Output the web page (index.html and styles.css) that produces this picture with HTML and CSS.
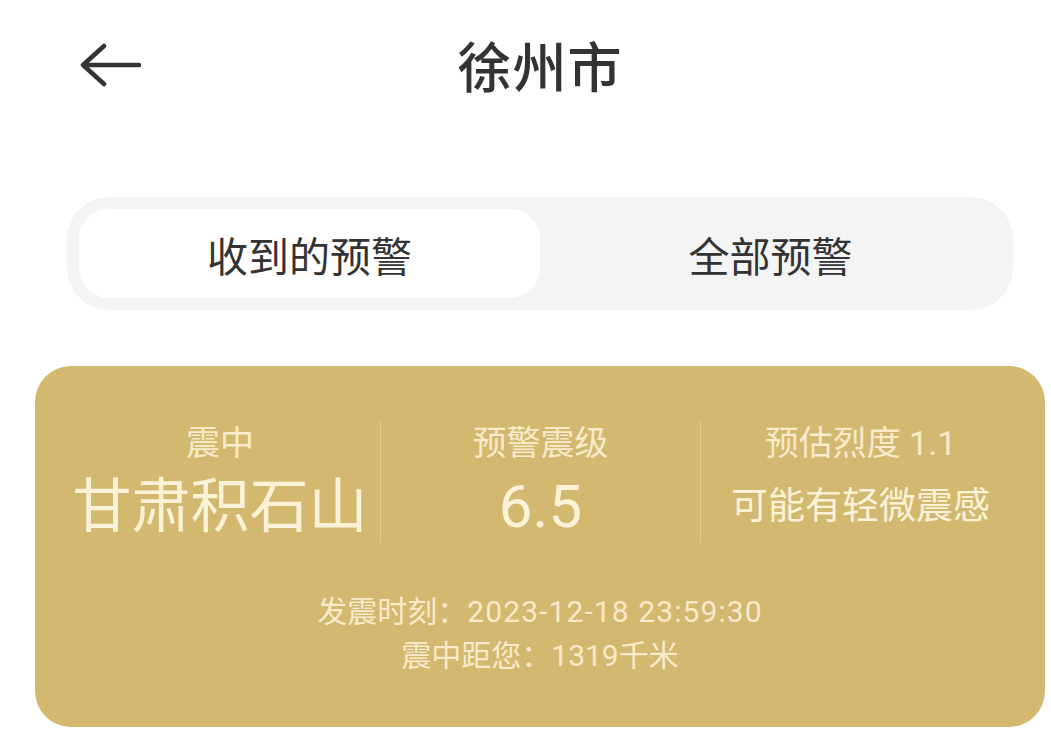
FILE: index.html
```html
<!DOCTYPE html>
<html lang="zh-CN">
<head>
<meta charset="utf-8">
<title>徐州市</title>
<link rel="stylesheet" href="styles.css">
</head>
<body>
<div class="screen">
  <header class="header">
    <button class="back" aria-label="返回">
      <svg width="64" height="48" viewBox="0 0 64 48">
        <path d="M24 5 L3 24 L24 43 M3 24 L59 24" fill="none" stroke="#333" stroke-width="4.5" stroke-linecap="round" stroke-linejoin="round"/>
      </svg>
    </button>
    <h1 class="title">徐州市</h1>
  </header>

  <nav class="segment">
    <div class="seg-item active">收到的预警</div>
    <div class="seg-item">全部预警</div>
  </nav>

  <section class="card">
    <div class="stats">
      <div class="stat">
        <div class="label">震中</div>
        <div class="value place">甘肃积石山</div>
      </div>
      <div class="stat">
        <div class="label">预警震级</div>
        <div class="value mag">6.5</div>
      </div>
      <div class="stat">
        <div class="label">预估烈度 1.1</div>
        <div class="value feel">可能有轻微震感</div>
      </div>
    </div>
    <div class="info">
      <div class="line">发震时刻：<span class="num">2023-12-18 23:59:30</span></div>
      <div class="line">震中距您：1319千米</div>
    </div>
  </section>
</div>
</body>
</html>
```

FILE: styles.css
```css
html, body {
  margin: 0;
  padding: 0;
  background: #ffffff;
  overflow: hidden;
}

.screen {
  width: 1080px;
  font-family: Roboto, "Noto Sans CJK SC", sans-serif;
  color: #333333;
}

.header {
  position: relative;
  height: 130px;
  display: flex;
  align-items: center;
  justify-content: center;
}

.back {
  position: absolute;
  left: 80px;
  top: 41px;
  padding: 0;
  border: 0;
  background: none;
  display: flex;
}

.title {
  margin: 0;
  font-family: "Noto Sans CJK SC", sans-serif;
  font-size: 54px;
  font-weight: 500;
  line-height: 60px;
  color: #333333;
  letter-spacing: 1px;
}

.segment {
  margin: 67px 67px 0 67px;
  height: 113px;
  box-sizing: border-box;
  padding: 12px;
  background: #f4f4f4;
  border-radius: 42px;
  display: flex;
}

.seg-item {
  flex: 1;
  display: flex;
  align-items: center;
  justify-content: center;
  border-radius: 30px;
  font-family: "Noto Sans CJK SC", sans-serif;
  font-size: 41px;
  color: #333333;
}

.seg-item.active {
  background: #ffffff;
}

.card {
  margin: 56px 35px 0 35px;
  height: 361px;
  box-sizing: border-box;
  padding: 54px 25px 0 25px;
  background: #d3b86f;
  border-radius: 36px;
  color: #fcf2d8;
}

.stats {
  display: grid;
  grid-template-columns: 1fr 1fr 1fr;
  height: 123px;
}

.stat {
  display: flex;
  flex-direction: column;
  align-items: center;
  justify-content: center;
  gap: 6px;
}

.stat + .stat {
  border-left: 1.5px solid #e3cb8e;
}

.label {
  font-size: 34px;
  line-height: 44px;
  color: #f8eacb;
  white-space: nowrap;
}

.value {
  line-height: 72px;
  white-space: nowrap;
}

.place {
  font-size: 59px;
}

.mag {
  font-size: 60px;
  font-weight: 400;
}

.feel {
  font-size: 37px;
}

.info {
  margin-top: 47px;
  display: flex;
  flex-direction: column;
  align-items: center;
}

.line {
  font-size: 30px;
  line-height: 44px;
  color: #f8eacb;
  white-space: nowrap;
}

.num {
  letter-spacing: 1.1px;
}
```
